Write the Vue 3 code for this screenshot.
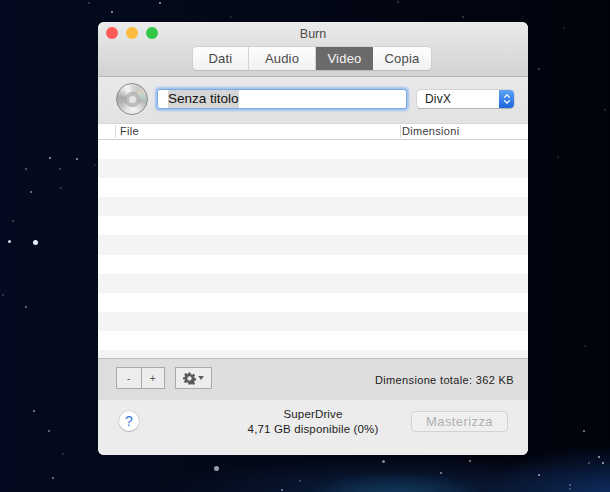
<script setup>
const tabs = [
  { name: 'Dati', width: 56 },
  { name: 'Audio', width: 67 },
  { name: 'Video', width: 57, active: true },
  { name: 'Copia', width: 58 }
]

const rows = Array.from({ length: 12 }, (_, i) => i)

// x, y, size, opacity of the wallpaper stars
const stars = [
  [33, 240, 5, 1], [8, 240, 3, 0.9], [49, 157, 2, 0.7], [76, 158, 2, 0.65], [25, 168, 2, 0.4],
  [59, 168, 2, 0.3], [30, 191, 2, 0.55], [60, 187, 2, 0.25], [12, 220, 2, 0.3], [94, 164, 2, 0.15],
  [159, 2, 2, 0.7], [111, 11, 2, 0.65], [88, 2, 2, 0.25], [230, 16, 2, 0.15], [462, 16, 2, 0.25],
  [2, 294, 2, 0.25], [25, 306, 2, 0.5], [33, 410, 2, 0.6], [48, 430, 2, 0.5], [62, 453, 2, 0.2], [52, 477, 2, 0.55],
  [538, 68, 2, 0.3], [563, 27, 2, 0.15], [604, 109, 2, 0.2], [557, 156, 2, 0.15], [584, 345, 2, 0.15], [583, 430, 2, 0.6],
  [598, 456, 2, 0.75], [602, 462, 2, 0.75], [588, 462, 2, 0.35], [538, 474, 2, 0.7], [569, 484, 2, 0.4], [569, 488, 2, 0.3],
  [214, 466, 5, 0.65], [382, 460, 3, 0.55], [469, 460, 2, 0.6], [440, 472, 2, 0.6], [281, 489, 2, 0.6], [299, 480, 2, 0.3],
  [397, 1, 2, 0.25]
]
</script>

<template>
  <div class="desktop">
    <i
      v-for="(s, i) in stars"
      :key="i"
      class="star"
      :style="{ left: s[0] + 'px', top: s[1] + 'px', width: s[2] + 'px', height: s[2] + 'px', opacity: s[3] }"
    ></i>

    <div class="window">
      <header class="titlebar">
        <div class="lights">
          <span class="light red"></span>
          <span class="light yellow"></span>
          <span class="light green"></span>
        </div>
        <div class="title">Burn</div>
        <div class="tabs">
          <button
            v-for="tab in tabs"
            :key="tab.name"
            :class="['tab', { active: tab.active }]"
            :style="{ width: tab.width + 'px' }"
          >{{ tab.name }}</button>
        </div>
      </header>

      <div class="namebar">
        <div class="disc"><div class="disc-hub"></div></div>
        <div class="name-input"><span class="selected">Senza titolo</span></div>
        <div class="select">
          <span class="select-label">DivX</span>
          <span class="select-arrows">
            <svg width="8" height="12" viewBox="0 0 8 12">
              <path d="M1.2 4.6 L4 1.8 L6.8 4.6 M1.2 7.4 L4 10.2 L6.8 7.4" fill="none" stroke="#fff" stroke-width="1.3" />
            </svg>
          </span>
        </div>
      </div>

      <div class="table">
        <div class="thead">
          <div class="th th-file">File</div>
          <div class="th th-size">Dimensioni</div>
        </div>
        <div class="tbody">
          <div v-for="r in rows" :key="r" :class="['row', { odd: r % 2 === 1 }]"></div>
        </div>
      </div>

      <div class="toolbar">
        <div class="stepper">
          <button class="tool-btn">-</button>
          <button class="tool-btn">+</button>
        </div>
        <button class="gear-btn">
          <svg width="13" height="13" viewBox="0 0 24 24">
            <path fill="#5a5a5a" fill-rule="evenodd" d="M10 1h4l.6 3.2 2.2.9 2.7-1.8 2.8 2.8-1.8 2.7.9 2.2 3.2.6v4l-3.2.6-.9 2.2 1.8 2.7-2.8 2.8-2.7-1.8-2.2.9L14 23h-4l-.6-3.2-2.2-.9-2.7 1.8-2.8-2.8 1.8-2.7-.9-2.2L0 14v-4l3.2-.6.9-2.2-1.8-2.7 2.8-2.8 2.7 1.8 2.2-.9zM12 8a4 4 0 1 0 0 8 4 4 0 0 0 0-8z" />
          </svg>
          <svg width="6" height="4" viewBox="0 0 7 5"><path d="M0 0h7L3.5 5z" fill="#5a5a5a" /></svg>
        </button>
        <div class="total">Dimensione totale: 362 KB</div>
      </div>

      <footer class="statusbar">
        <div class="help">?</div>
        <div class="drive">
          <div>SuperDrive</div>
          <div>4,71 GB disponibile (0%)</div>
        </div>
        <button class="burn-btn">Masterizza</button>
      </footer>
    </div>
  </div>
</template>

<style>
html, body {
  margin: 0;
  background: #030816;
}
</style>

<style scoped>
.desktop {
  position: relative;
  width: 610px;
  height: 492px;
  overflow: hidden;
  padding: 22px 0 0 98px;
  box-sizing: border-box;
  background:
    radial-gradient(ellipse 90px 26px at 395px 497px, #123a5c 0%, rgba(18, 58, 92, 0) 100%),
    radial-gradient(ellipse 130px 50px at 610px 495px, #0f2d60 0%, rgba(15, 45, 96, 0) 100%),
    radial-gradient(ellipse 240px 36px at 400px 492px, #0b1f40 0%, rgba(11, 31, 64, 0) 100%),
    linear-gradient(90deg, #040b20 0%, #030919 30%, #02040f 85%, #01030c 100%);
  font-family: "Liberation Sans", Arial, sans-serif;
}

.star {
  position: absolute;
  border-radius: 50%;
  background: #e6efff;
}

.window {
  position: relative;
  width: 430px;
  height: 433px;
  display: flex;
  flex-direction: column;
  border-radius: 6px;
  overflow: hidden;
  background: #ececec;
  color: #1c1c1c;
}

.titlebar {
  position: relative;
  height: 55px;
  box-sizing: border-box;
  background: linear-gradient(#ebebeb, #d2d2d2);
  border-bottom: 1px solid #b9b9b9;
}

.lights {
  position: absolute;
  left: 8px;
  top: 5px;
  display: flex;
  gap: 8px;
}

.light {
  width: 12px;
  height: 12px;
  border-radius: 50%;
}
.light.red { background: #fc5b57; }
.light.yellow { background: #fdbb40; }
.light.green { background: #33c748; }

.title {
  padding-top: 5px;
  text-align: center;
  font-size: 12.5px;
  line-height: 14px;
  color: #4a4a4a;
}

.tabs {
  display: flex;
  margin: 6px 0 0 95px;
  height: 23px;
  width: 238px;
  border-radius: 4px;
  box-shadow: 0 0 0 0.5px #c4c4c4, 0 1px 0 #b5b5b5;
  overflow: hidden;
}

.tab {
  border: 0;
  border-right: 1px solid #d4d4d4;
  padding: 0;
  background: linear-gradient(#fdfdfd, #f2f2f2);
  font: inherit;
  font-size: 13px;
  letter-spacing: 0.2px;
  color: #484848;
}
.tab:last-child { border-right: 0; }
.tab.active {
  background: #6a6a6a;
  color: #f4f4f4;
  border-right: 0;
}

.namebar {
  height: 46px;
  box-sizing: border-box;
  display: flex;
  align-items: center;
  padding: 0 14px 2px 18px;
  background: linear-gradient(#e9e9e9, #e2e2e2);
}

.disc {
  flex: none;
  width: 32px;
  height: 32px;
  box-sizing: border-box;
  margin-right: 9px;
  display: flex;
  align-items: center;
  justify-content: center;
  border-radius: 50%;
  border: 1px solid #8c8c8c;
  background: conic-gradient(
    from 0deg,
    #dcdcdc 0deg,
    #c9c9c9 30deg,
    #d8cfc0 50deg,
    #bcd2cc 75deg,
    #b5b5b5 105deg,
    #d5d5d5 130deg,
    #f4f4f0 170deg,
    #e8e8e8 200deg,
    #b5b5b5 250deg,
    #a9a9a9 280deg,
    #e6e6e6 320deg,
    #f5f5f5 340deg,
    #dcdcdc 360deg
  );
}

.disc-hub {
  width: 13px;
  height: 13px;
  box-sizing: border-box;
  border-radius: 50%;
  border: 3px solid #bdbdbd;
  outline: 1px solid #a5a5a5;
  background: #e6e6e6;
}

.name-input {
  width: 250px;
  height: 20px;
  box-sizing: border-box;
  padding-left: 10px;
  background: #fff;
  border-radius: 3px;
  border: 1px solid #7fa9e3;
  box-shadow: 0 0 2px 1.5px #9fc2f0;
  font-size: 13.5px;
  line-height: 18px;
  color: #111;
}

.selected {
  background: #d6d6d6;
  display: inline-block;
}

.select {
  display: flex;
  margin-left: 10px;
  width: 97px;
  height: 18px;
  border-radius: 4px;
  overflow: hidden;
  background: #fff;
  box-shadow: 0 0 0 0.5px #bdbdbd, 0 1px 0 #aaa;
}

.select-label {
  flex: 1;
  padding-left: 8px;
  font-size: 12px;
  line-height: 18px;
  letter-spacing: 0.2px;
  color: #222;
}

.select-arrows {
  width: 15px;
  display: flex;
  align-items: center;
  justify-content: center;
  background: linear-gradient(#5fa3f7, #1a66de);
}

.table {
  flex: 1;
  min-height: 0;
  display: flex;
  flex-direction: column;
  background: #fff;
  border-bottom: 1px solid #bdbdbd;
}

.thead {
  display: flex;
  flex: none;
  height: 17px;
  box-sizing: border-box;
  border-top: 1px solid #d8d8d8;
  border-bottom: 1px solid #d2d2d2;
  background: #fff;
  font-size: 11px;
  color: #3c3c3c;
}

.th {
  padding-left: 4px;
  letter-spacing: 0.3px;
  border-left: 1px solid #d9d9d9;
  margin: 1px 0;
  height: 13px;
  line-height: 13px;
}
.th-file {
  margin-left: 17px;
  width: 280px;
}
.th-size { flex: 1; padding-left: 1px; }

.tbody {
  flex: 1;
  overflow: hidden;
}

.row {
  height: 19.1px;
  background: #fff;
}
.row.odd { background: #f4f4f4; }

.toolbar {
  height: 41px;
  flex: none;
  box-sizing: border-box;
  display: flex;
  align-items: flex-start;
  padding: 8px 14px 0 18px;
  background: #dedede;
}

.stepper {
  display: flex;
  border: 1px solid #a9a9a9;
  height: 22px;
  box-sizing: border-box;
}

.tool-btn {
  width: 23.5px;
  padding: 0;
  border: 0;
  background: #ededed;
  font: inherit;
  font-size: 10px;
  color: #555;
}
.tool-btn + .tool-btn { border-left: 1px solid #a9a9a9; }

.gear-btn {
  display: flex;
  align-items: center;
  justify-content: center;
  gap: 2px;
  width: 37px;
  height: 22px;
  margin-left: 10px;
  padding: 0;
  box-sizing: border-box;
  border: 1px solid #a9a9a9;
  background: #ededed;
}

.total {
  margin-left: auto;
  margin-top: 2px;
  font-size: 11px;
  line-height: 22px;
  letter-spacing: 0.35px;
  color: #222;
}

.statusbar {
  height: 55px;
  flex: none;
  box-sizing: border-box;
  display: flex;
  align-items: flex-start;
  padding: 11px 20px 0 21px;
  background: #ececec;
}

.help {
  flex: none;
  width: 20px;
  height: 20px;
  border-radius: 50%;
  background: #fff;
  box-shadow: 0 0 0 0.5px #c4c4c4, 0 1px 1px #aaa;
  text-align: center;
  font-size: 14px;
  line-height: 20px;
  color: #3b78d8;
}

.drive {
  flex: none;
  width: 190px;
  margin-left: 79px;
  margin-top: -4px;
  text-align: center;
  font-size: 11.5px;
  line-height: 15px;
  letter-spacing: 0.15px;
  color: #222;
}

.burn-btn {
  flex: none;
  width: 97px;
  height: 21px;
  margin-left: auto;
  padding: 0;
  box-sizing: border-box;
  border: 1px solid #d2d2d2;
  border-radius: 4px;
  background: #efefef;
  font: inherit;
  font-size: 13px;
  letter-spacing: 0.4px;
  color: #b0b0b0;
}
</style>
